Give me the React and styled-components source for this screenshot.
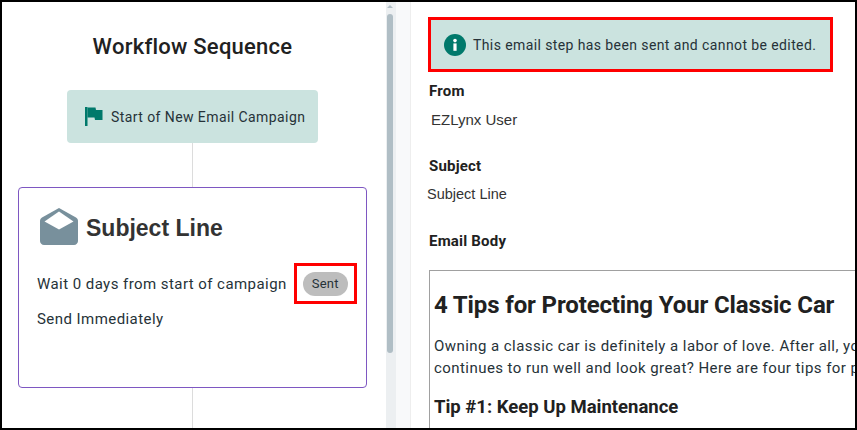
import React from "react";
import styled, { createGlobalStyle } from "styled-components";

const GlobalStyle = createGlobalStyle`
  html, body {
    margin: 0;
    padding: 0;
    background: #fff;
  }
  * {
    box-sizing: border-box;
  }
`;

function FlagIcon() {
  return (
    <svg width="18" height="20" viewBox="0 0 18 20">
      <rect x="0" y="0" width="2.5" height="19" fill="#00796b" />
      <path d="M2.5 0.5H10.5L11 3H17.5V13H10L9.5 10.5H2.5Z" fill="#00796b" />
    </svg>
  );
}

function EnvelopeIcon() {
  return (
    <svg width="38" height="37" viewBox="0 0 38 37">
      <path
        d="M19 0L36 9.5C37.3 10.3 38 11.5 38 13V33C38 35.2 36.2 37 34 37H4C1.8 37 0 35.2 0 33V13C0 11.5 0.7 10.3 2 9.5Z"
        fill="#78909c"
      />
      <path d="M19 3.5L33.5 13.5L19 21.5L4.5 13.5Z" fill="#fff" />
    </svg>
  );
}

function InfoIcon() {
  return (
    <svg width="22" height="22" viewBox="0 0 22 22">
      <circle cx="11" cy="11" r="11" fill="#00796b" />
      <rect x="9.4" y="9.4" width="3.2" height="7.4" fill="#fff" />
      <circle cx="11" cy="6.6" r="1.8" fill="#fff" />
    </svg>
  );
}

function App() {
  return (
    <Frame>
      <GlobalStyle />
      <Sequence>
        <Title>Workflow Sequence</Title>
        <StartBox>
          <FlagIcon />
          <StartLabel>Start of New Email Campaign</StartLabel>
        </StartBox>
        <Connector $height={44} />
        <StepCard>
          <StepHead>
            <EnvelopeIcon />
            <StepName>Subject Line</StepName>
          </StepHead>
          <WaitRow>
            <StepText>Wait 0 days from start of campaign</StepText>
            <Highlight>
              <SentPill>Sent</SentPill>
            </Highlight>
          </WaitRow>
          <StepText>Send Immediately</StepText>
        </StepCard>
        <Connector $height={40} />
      </Sequence>
      <Scrollbar>
        <ScrollArrow />
        <ScrollThumb />
      </Scrollbar>
      <Gutter />
      <Details>
        <Notice>
          <InfoIcon />
          <NoticeText>This email step has been sent and cannot be edited.</NoticeText>
        </Notice>
        <FieldLabel $top={9}>From</FieldLabel>
        <FieldValue $indent={3} $size={15} $top={9}>EZLynx User</FieldValue>
        <FieldLabel $top={26}>Subject</FieldLabel>
        <FieldValue $indent={-1} $size={14.5} $top={8}>Subject Line</FieldValue>
        <FieldLabel $top={27}>Email Body</FieldLabel>
        <BodyFrame>
          <BodyTitle>4 Tips for Protecting Your Classic Car</BodyTitle>
          <BodyText>
            Owning a classic car is definitely a labor of love. After all, you
            <br />
            continues to run well and look great? Here are four tips for protecting
          </BodyText>
          <BodySubtitle>Tip #1: Keep Up Maintenance</BodySubtitle>
        </BodyFrame>
      </Details>
    </Frame>
  );
}

export default App;

const Frame = styled.div`
  width: 857px;
  height: 430px;
  border: 2px solid #000;
  display: flex;
  overflow: hidden;
  font-family: Roboto, "Liberation Sans", sans-serif;
  color: #263238;
  background: #fff;
`;

const Sequence = styled.div`
  width: 384px;
  flex-shrink: 0;
  padding: 0 19px 0 16px;
  display: flex;
  flex-direction: column;
  align-items: center;
`;

const Title = styled.h2`
  margin: 30px 0 28px;
  font-size: 22px;
  line-height: 30px;
  font-weight: 500;
  letter-spacing: 0.25px;
  color: #212121;
`;

const StartBox = styled.div`
  width: 251px;
  height: 53px;
  flex-shrink: 0;
  background: #cbe3df;
  border-radius: 4px;
  display: flex;
  align-items: center;
  padding: 0 0 0 18px;
  gap: 8px;
`;

const StartLabel = styled.span`
  font-size: 14px;
  letter-spacing: 0.42px;
  white-space: nowrap;
`;

const Connector = styled.div`
  width: 1px;
  height: ${(p) => p.$height}px;
  flex-shrink: 0;
  background: #dcdcdc;
`;

const StepCard = styled.div`
  width: 349px;
  height: 201px;
  flex-shrink: 0;
  border: 1px solid #7e57c2;
  border-radius: 4px;
  padding: 20px 0 0 18px;
`;

const StepHead = styled.div`
  display: flex;
  align-items: center;
  gap: 8px;
  padding-left: 3px;
`;

const StepName = styled.span`
  font-family: "Liberation Sans", Arial, sans-serif;
  font-size: 23px;
  font-weight: 700;
  padding-top: 3px;
  color: #333;
`;

const WaitRow = styled.div`
  display: flex;
  align-items: center;
  margin: 18px 0 4px;
`;

const StepText = styled.div`
  font-size: 15px;
  line-height: 22px;
  letter-spacing: 0.44px;
  white-space: nowrap;
`;

const Highlight = styled.div`
  width: 63px;
  height: 41px;
  margin-left: 7px;
  border: 3px solid #f00;
  display: flex;
  align-items: center;
  justify-content: center;
`;

const SentPill = styled.span`
  width: 45px;
  height: 24px;
  border-radius: 12px;
  background: #bdbdbd;
  font-size: 13px;
  letter-spacing: 0.3px;
  display: flex;
  align-items: center;
  justify-content: center;
`;

const Scrollbar = styled.div`
  width: 10px;
  flex-shrink: 0;
  background: #eceff1;
  padding: 3px 3px 0 1px;
`;

const ScrollArrow = styled.div`
  width: 0;
  height: 0;
  margin: 0 auto 6px;
  border-left: 3px solid transparent;
  border-right: 3px solid transparent;
  border-bottom: 3px solid #b0bec5;
`;

const ScrollThumb = styled.div`
  height: 339px;
  border-radius: 3px;
  background: #b0bec5;
`;

const Gutter = styled.div`
  width: 15px;
  flex-shrink: 0;
  background: #f8f9fa;
  border-right: 1px solid #eeeeee;
`;

const Details = styled.div`
  flex: 1;
  min-width: 0;
  padding: 15px 0 0 17px;
  overflow: hidden;
`;

const Notice = styled.div`
  width: 405px;
  height: 55px;
  border: 3px solid #f00;
  background: #cbe3df;
  display: flex;
  align-items: center;
  padding-left: 13px;
  gap: 7px;
`;

const NoticeText = styled.span`
  font-size: 14px;
  letter-spacing: 0.4px;
  white-space: nowrap;
`;

const FieldLabel = styled.div`
  margin: ${(p) => p.$top}px 0 0 1px;
  font-size: 15px;
  line-height: 20px;
  font-weight: 700;
  letter-spacing: 0.2px;
  color: #212121;
`;

const FieldValue = styled.div`
  margin: ${(p) => p.$top}px 0 0 ${(p) => p.$indent}px;
  font-family: "Liberation Sans", Arial, sans-serif;
  font-size: ${(p) => p.$size}px;
  line-height: 20px;
  color: #333;
`;

const BodyFrame = styled.div`
  width: 520px;
  height: 200px;
  margin: 19px 0 0 1px;
  border: 1px solid #a0a0a0;
  padding: 18px 0 0 4px;
  white-space: nowrap;
`;

const BodyTitle = styled.h1`
  margin: 0 0 14px;
  font-size: 24px;
  line-height: 32px;
  font-weight: 700;
  letter-spacing: -0.13px;
  color: #212121;
`;

const BodyText = styled.p`
  margin: 0 0 16px;
  font-size: 15px;
  line-height: 22px;
  letter-spacing: 0.44px;
`;

const BodySubtitle = styled.h3`
  margin: 0;
  font-size: 18.5px;
  line-height: 24px;
  font-weight: 700;
  color: #212121;
`;
